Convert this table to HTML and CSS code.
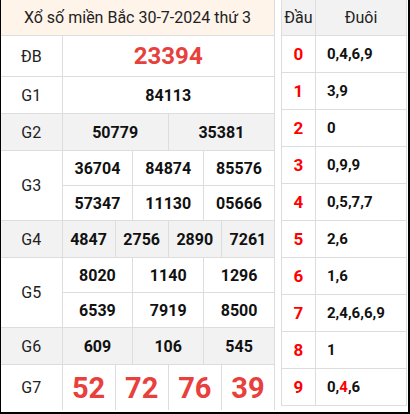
FILE: index.html
```html
<!DOCTYPE html>
<html lang="vi">
<head>
  <meta charset="UTF-8" />
  <meta name="viewport" content="width=device-width, initial-scale=1.0">
  <title>Xổ số miền Bắc 30-7-2024</title>
  <link rel="stylesheet" href="styles.css">
</head>
<body>
<div class="frame">
  <table class="kq">
    <colgroup>
      <col class="c-label">
      <col><col><col><col><col><col><col><col><col><col><col><col>
    </colgroup>
    <tr class="r-head">
      <th colspan="13">Xổ số miền Bắc 30-7-2024 thứ 3</th>
    </tr>
    <tr class="r-db">
      <td class="lbl">ĐB</td>
      <td colspan="12" class="db">23394</td>
    </tr>
    <tr class="r-std">
      <td class="lbl">G1</td>
      <td colspan="12">84113</td>
    </tr>
    <tr class="r-std alt">
      <td class="lbl">G2</td>
      <td colspan="6">50779</td>
      <td colspan="6">35381</td>
    </tr>
    <tr class="r-half">
      <td class="lbl" rowspan="2">G3</td>
      <td colspan="4">36704</td>
      <td colspan="4">84874</td>
      <td colspan="4">85576</td>
    </tr>
    <tr class="r-half">
      <td colspan="4">57347</td>
      <td colspan="4">11130</td>
      <td colspan="4">05666</td>
    </tr>
    <tr class="r-std alt">
      <td class="lbl">G4</td>
      <td colspan="3">4847</td>
      <td colspan="3">2756</td>
      <td colspan="3">2890</td>
      <td colspan="3">7261</td>
    </tr>
    <tr class="r-half">
      <td class="lbl" rowspan="2">G5</td>
      <td colspan="4">8020</td>
      <td colspan="4">1140</td>
      <td colspan="4">1296</td>
    </tr>
    <tr class="r-half">
      <td colspan="4">6539</td>
      <td colspan="4">7919</td>
      <td colspan="4">8500</td>
    </tr>
    <tr class="r-std alt">
      <td class="lbl">G6</td>
      <td colspan="4">609</td>
      <td colspan="4">106</td>
      <td colspan="4">545</td>
    </tr>
    <tr class="r-g7">
      <td class="lbl">G7</td>
      <td colspan="3" class="g7">52</td>
      <td colspan="3" class="g7">72</td>
      <td colspan="3" class="g7">76</td>
      <td colspan="3" class="g7">39</td>
    </tr>
  </table>

  <table class="loto">
    <tr>
      <th class="dau">Đầu</th>
      <th>Đuôi</th>
    </tr>
    <tr><td class="dau">0</td><td>0,4,6,9</td></tr>
    <tr><td class="dau">1</td><td>3,9</td></tr>
    <tr><td class="dau">2</td><td>0</td></tr>
    <tr><td class="dau">3</td><td>0,9,9</td></tr>
    <tr><td class="dau">4</td><td>0,5,7,7</td></tr>
    <tr><td class="dau">5</td><td>2,6</td></tr>
    <tr><td class="dau">6</td><td>1,6</td></tr>
    <tr><td class="dau">7</td><td>2,4,6,6,9</td></tr>
    <tr><td class="dau">8</td><td>1</td></tr>
    <tr><td class="dau">9</td><td>0,<span class="hot">4</span>,6</td></tr>
  </table>
</div>
</body>
</html>
```

FILE: styles.css
```css
body {
  margin: 0;
  font-family: Roboto, "Liberation Sans", Arial, sans-serif;
  color: #111;
  background: #fff;
}

.frame {
  width: 407px;
  height: 412px;
  border-left: 1px solid #000;
  border-right: 2px solid #000;
  border-bottom: 2px solid #000;
  display: flex;
  align-items: flex-start;
  gap: 6px;
  overflow: hidden;
}

table {
  border-collapse: collapse;
  table-layout: fixed;
}

td, th {
  border: 1px solid #ddd;
  padding: 0;
  text-align: center;
  font-size: 16px;
}

/* left: prize table */
.kq {
  width: 274px;
  border-top: 0;
}

.kq .c-label {
  width: 61px;
}

.kq th {
  height: 35px;
  background: #fff4ea;
  font-weight: normal;
  color: #222;
  border-top: 0;
  border-left: 0;
}

.kq td {
  font-weight: bold;
}

.kq td:first-child,
.kq .r-half + .r-half td:first-child {
  border-left: 0;
}

.kq .r-half + .r-half td:first-child {
  border-left: 1px solid #ddd;
}

.kq .lbl {
  font-weight: normal;
  color: #222;
  border-left: 0;
}

.r-db td { height: 40px; }
.r-std td { height: 36px; }
.r-half td { height: 34px; }
.r-g7 td { height: 45px; border-bottom: 0; }

.alt td {
  background: #f2f2f2;
}

.db {
  font-size: 24px;
  color: #e8403c;
}

.g7 {
  font-size: 29px;
  color: #e8403c;
}

/* right: loto table */
.loto {
  width: 126px;
}

.loto th {
  height: 35px;
  background: #f2f2f2;
  font-weight: normal;
  color: #222;
  border-top: 0;
}

.loto td {
  height: 36px;
  text-align: left;
  padding-left: 11px;
  font-weight: bold;
  font-size: 15px;
}

.loto .dau {
  width: 33px;
  padding-left: 0;
  text-align: center;
  color: #f00;
  font-size: 17px;
}

.loto th.dau {
  color: #222;
  font-size: 16px;
}

.hot {
  color: #f00;
}
```
